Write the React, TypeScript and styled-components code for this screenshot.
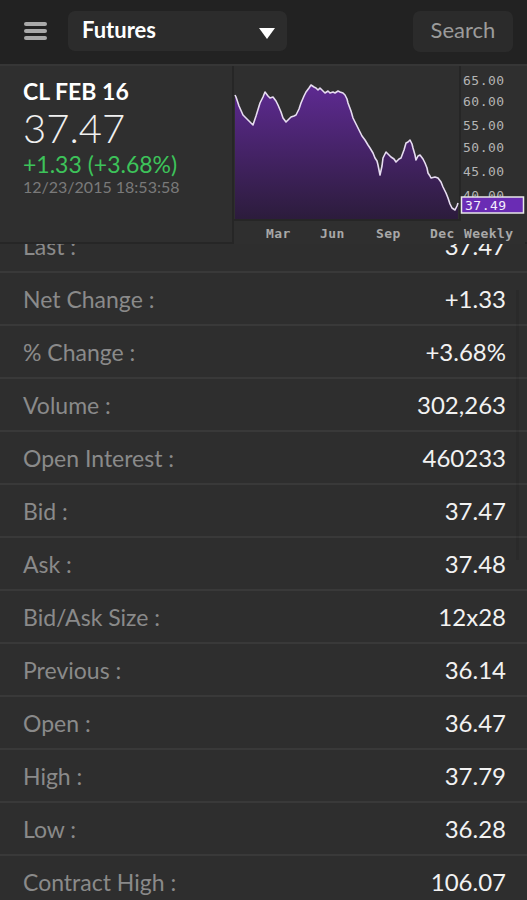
import React from "react";
import styled, { createGlobalStyle } from "styled-components";

const Global = createGlobalStyle`
  html, body { margin: 0; padding: 0; background: #2e2e2e; }
  body { font-family: Lato, "Open Sans", sans-serif; width: 527px; height: 900px; overflow: hidden; }
  * { box-sizing: border-box; }
`;

const Page = styled.div`
  width: 527px;
  height: 900px;
  display: flex;
  flex-direction: column;
  background: #2e2e2e;
  overflow: hidden;
  position: relative;
`;

const TopBar = styled.header`
  height: 66px;
  flex: none;
  background: #222222;
  border-bottom: 2px solid #363636;
  display: flex;
  align-items: center;
  padding: 0 14px 0 24px;
  position: relative;
  z-index: 2;
`;

const Burger = styled.div`
  width: 23px;
  display: flex;
  flex-direction: column;
  gap: 3px;
  margin-right: 21px;
  margin-top: -2px;
  span {
    display: block;
    height: 4px;
    border-radius: 2px;
    background: #a9a9a9;
  }
`;

const Select = styled.div`
  width: 219px;
  height: 40px;
  border-radius: 7px;
  background: #2c2c2c;
  display: flex;
  align-items: center;
  justify-content: space-between;
  padding: 0 12px 4px 14px;
  color: #ffffff;
  font-size: 22px;
  font-weight: 700;
  margin-top: -2px;
`;

const Caret = styled.span`
  width: 0;
  height: 0;
  border-left: 8.5px solid transparent;
  border-right: 8.5px solid transparent;
  border-top: 11px solid #ffffff;
  margin-top: 8px;
`;

const SearchButton = styled.div`
  margin-left: auto;
  width: 100px;
  height: 41px;
  border-radius: 7px;
  background: #2b2b2b;
  color: #9b9b9b;
  font-size: 22px;
  display: flex;
  align-items: center;
  justify-content: center;
  padding-bottom: 4px;
  margin-top: -2px;
`;

const QuotePanel = styled.section`
  height: 178px;
  flex: none;
  display: flex;
  background: #2f2f2f;
  border-bottom: 2px solid #262626;
  position: relative;
  z-index: 2;
`;

const QuoteInfo = styled.div`
  width: 234px;
  flex: none;
  border-right: 2px solid #262626;
  padding: 11px 0 0 23px;
  display: flex;
  flex-direction: column;
`;

const Symbol = styled.div`
  color: #ffffff;
  font-size: 23px;
  font-weight: 700;
  line-height: 28px;
`;

const Price = styled.div`
  color: #f0f0f0;
  font-size: 40px;
  font-weight: 300;
  line-height: 46px;
`;

const Change = styled.div`
  color: #3dc35a;
  font-size: 23px;
  line-height: 26px;
`;

const Stamp = styled.div`
  color: #7a7a7a;
  font-size: 16px;
  line-height: 20px;
`;

const ChartBox = styled.div`
  flex: 1;
  display: flex;
`;

const ListViewport = styled.div`
  flex: 1;
  overflow: hidden;
  position: relative;
`;

const List = styled.div`
  margin-top: -24px;
  display: flex;
  flex-direction: column;
`;

const Row = styled.div`
  height: 53px;
  flex: none;
  display: flex;
  align-items: center;
  justify-content: space-between;
  padding: 0 21px 0 23px;
  background: #2e2e2e;
  border-bottom: 2px solid #393939;
`;

const Label = styled.span`
  color: #8a8a8a;
  font-size: 23px;
`;

const Value = styled.span`
  color: #f2f2f2;
  font-size: 24px;
`;

const ScrollThumb = styled.div`
  position: absolute;
  right: 8px;
  top: 46px;
  width: 3px;
  height: 270px;
  background: rgba(0, 0, 0, 0.08);
`;

const rows: [string, string][] = [
  ["Last :", "37.47"],
  ["Net Change :", "+1.33"],
  ["% Change :", "+3.68%"],
  ["Volume :", "302,263"],
  ["Open Interest :", "460233"],
  ["Bid :", "37.47"],
  ["Ask :", "37.48"],
  ["Bid/Ask Size :", "12x28"],
  ["Previous :", "36.14"],
  ["Open :", "36.47"],
  ["High :", "37.79"],
  ["Low :", "36.28"],
  ["Contract High :", "106.07"],
  ["Contract Low :", "34.01"],
];

const pts: [number, number][] = [
  [1, 29], [2, 31], [5, 40], [9, 49], [13, 53], [16, 56], [19, 59], [22, 50], [26, 37], [29, 31],
  [31, 26], [34, 30], [36, 32], [39, 31], [42, 35], [44, 39], [47, 46], [49, 52], [52, 56], [55, 53],
  [57, 51], [60, 50], [62, 49], [65, 43], [67, 37], [70, 30], [72, 26], [75, 22], [77, 19], [80, 21],
  [82, 22], [84, 24], [86, 22], [89, 25], [91, 27], [94, 25], [96, 27], [99, 26], [101, 27], [104, 25],
  [106, 26], [109, 27], [111, 29], [113, 33], [114, 37], [117, 45], [119, 52], [122, 58], [126, 66],
  [128, 70], [131, 74], [134, 79], [136, 82], [139, 87], [141, 92], [143, 95], [144, 99], [145, 104],
  [146, 109], [148, 100], [149, 92], [151, 88], [152, 86], [155, 89], [157, 91], [160, 93], [162, 96],
  [165, 93], [167, 92], [170, 84], [172, 77], [174, 76], [176, 74], [178, 78], [179, 82], [181, 89],
  [182, 94], [184, 90], [186, 89], [189, 93], [191, 97], [193, 102], [194, 107], [196, 110], [197, 112],
  [201, 111], [204, 112], [207, 116], [209, 121], [212, 127], [214, 132], [216, 138], [218, 142],
  [221, 144], [223, 140], [224, 137],
];

const linePath = pts.map((p, i) => `${i === 0 ? "M" : "L"}${p[0]},${p[1]}`).join(" ");
const areaPath = `${linePath} L224,153 L1,153 Z`;

const yLabels: [string, number][] = [
  ["65.00", 14],
  ["60.00", 35],
  ["55.00", 59],
  ["50.00", 81],
  ["45.00", 105],
  ["40.00", 129],
];

const xLabels: [string, number][] = [
  ["Mar", 32],
  ["Jun", 86],
  ["Sep", 142],
  ["Dec", 196],
  ["Weekly", 230],
];

const mono = "'DejaVu Sans Mono', monospace";

const PriceChart = () => (
  <svg width="291" height="178" viewBox="0 0 291 178">
    <defs>
      <linearGradient id="fillGrad" x1="0" y1="0" x2="0" y2="1">
        <stop offset="0" stopColor="#5e2a92" />
        <stop offset="1" stopColor="#2c1c3c" />
      </linearGradient>
    </defs>
    <rect x="0" y="0" width="291" height="178" fill="#2f2f2f" />
    <path d={areaPath} fill="url(#fillGrad)" />
    <path d={linePath} fill="none" stroke="#e6dcf0" strokeWidth="1.6" strokeLinejoin="round" />
    <line x1="0" y1="154" x2="226" y2="154" stroke="#262626" strokeWidth="2" />
    <line x1="226" y1="0" x2="226" y2="155" stroke="#262626" strokeWidth="2" />
    {yLabels.map(([t, y]) => (
      <text key={t} x="229" y={y + 4.5} fill="#b4b4b4" fontFamily={mono} fontSize="13" letterSpacing="0.5">
        {t}
      </text>
    ))}
    <rect x="227.5" y="131" width="62" height="16" fill="#6a2cb4" stroke="#e8e8e8" strokeWidth="1.5" />
    <text x="231" y="143.5" fill="#f4eefc" fontFamily={mono} fontSize="13" letterSpacing="0.5">
      37.49
    </text>
    {xLabels.map(([t, x]) => (
      <text
        key={t}
        x={x}
        y="172"
        fill="#a8a8a8"
        fontFamily={mono}
        fontSize="13"
        fontWeight="bold"
        letterSpacing="0.4"
      >
        {t}
      </text>
    ))}
  </svg>
);

export default function App() {
  return (
    <Page>
      <Global />
      <TopBar>
        <Burger>
          <span />
          <span />
          <span />
        </Burger>
        <Select>
          Futures
          <Caret />
        </Select>
        <SearchButton>Search</SearchButton>
      </TopBar>
      <QuotePanel>
        <QuoteInfo>
          <Symbol>CL FEB 16</Symbol>
          <Price>37.47</Price>
          <Change>+1.33 (+3.68%)</Change>
          <Stamp>12/23/2015 18:53:58</Stamp>
        </QuoteInfo>
        <ChartBox>
          <PriceChart />
        </ChartBox>
      </QuotePanel>
      <ListViewport>
        <List>
          {rows.map(([l, v]) => (
            <Row key={l}>
              <Label>{l}</Label>
              <Value>{v}</Value>
            </Row>
          ))}
        </List>
        <ScrollThumb />
      </ListViewport>
    </Page>
  );
}
